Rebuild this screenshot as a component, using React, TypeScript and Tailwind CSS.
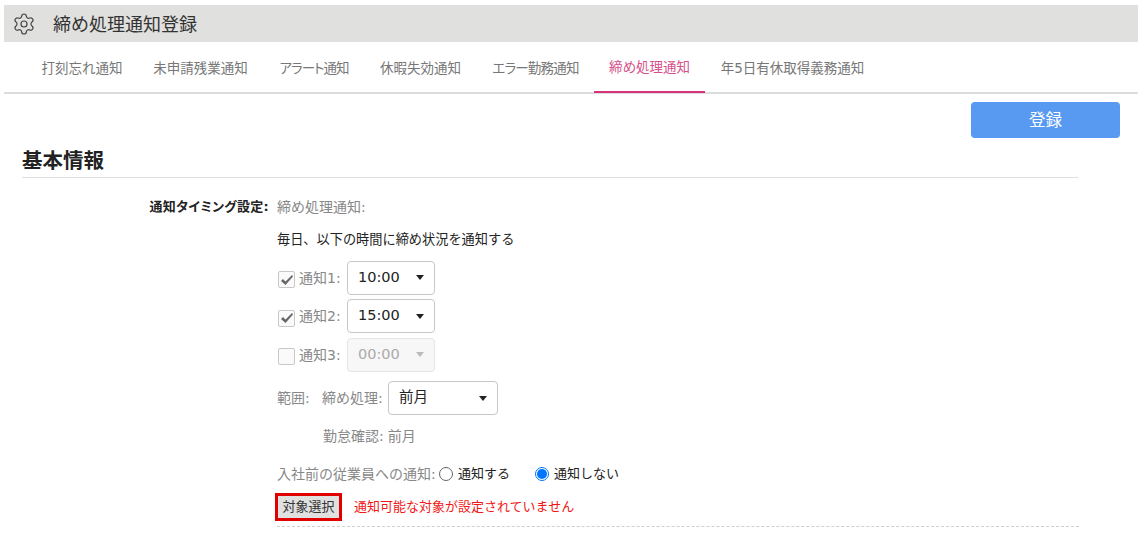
import React from 'react';
import { Settings } from 'lucide-react';

const font = "font-['DejaVu_Sans','Noto_Sans_CJK_JP',sans-serif]";

const tabs = [
  { label: '打刻忘れ通知', width: 'w-[110px]', extra: '' },
  { label: '未申請残業通知', width: 'w-[127px]', extra: '' },
  { label: 'アラート通知', width: 'w-[100px]', extra: 'tracking-[-1px]' },
  { label: '休暇失効通知', width: 'w-[113px]', extra: '' },
  { label: 'エラー勤務通知', width: 'w-[117px]', extra: 'tracking-[-0.8px]' },
  { label: '締め処理通知', width: 'w-[111px]', extra: '', active: true },
  { label: '年5日有休取得義務通知', width: 'w-[175px]', extra: '' },
];

function Check({ checked }: { checked: boolean }) {
  return (
    <span className="mt-[4px] ml-[1px] w-[17px] h-[17px] rounded-[2px] border border-[#c8c8c8] bg-[#fafafa] flex items-center justify-center shrink-0">
      {checked && (
        <svg width="14" height="12" viewBox="0 0 14 12">
          <path d="M1 7 L3 5 L5.5 7.5 L12 1 L13 2.5 L5.5 11 Z" fill="#666" />
        </svg>
      )}
    </span>
  );
}

function Select({ value, width, disabled }: { value: string; width: string; disabled?: boolean }) {
  return (
    <div
      className={`${width} h-[34px] rounded-[4px] border flex items-center justify-between pl-[10px] pr-[10px] text-[14.5px] ${
        disabled ? 'border-[#e4e4e4] bg-[#f7f7f7] text-[#aaa]' : 'border-[#c8c8c8] bg-white text-[#222]'
      }`}
    >
      <span>{value}</span>
      <span
        className={`w-0 h-0 border-x-[4px] border-x-transparent border-t-[5px] ${
          disabled ? 'border-t-[#bbb]' : 'border-t-[#222]'
        }`}
      />
    </div>
  );
}

function NotifyRow({ n, time, checked, disabled }: { n: number; time: string; checked: boolean; disabled?: boolean }) {
  return (
    <div className="flex items-center h-[34px] mb-[4.5px]">
      <Check checked={checked} />
      <span className="ml-[4px] w-[48px] text-[#888] text-[14px] mt-[1px]">通知{n}:</span>
      <Select value={time} width="w-[88px]" disabled={disabled} />
    </div>
  );
}

function Radio({ checked }: { checked: boolean }) {
  return checked ? (
    <span className="w-[14px] h-[14px] rounded-full border border-[#0075ff] bg-white flex items-center justify-center">
      <span className="w-[10px] h-[10px] rounded-full bg-[#0075ff]" />
    </span>
  ) : (
    <span className="w-[14px] h-[14px] rounded-full border border-[#666] bg-white" />
  );
}

export default function App() {
  return (
    <div className={`${font} w-[1138px] h-[542px] overflow-hidden bg-white pt-[5px] pl-[4px] text-[13px]`}>
      <div className="h-[37px] bg-[#e0e0de] flex items-center pl-[8px]">
        <Settings size={24} strokeWidth={1.2} className="text-[#444]" />
        <span className="ml-[17px] pt-[1px] text-[18px] text-[#333]">締め処理通知登録</span>
      </div>

      <div className="h-[52px] border-b-2 border-[#dcdcdc] flex pl-[23px]">
        {tabs.map((t) => (
          <div
            key={t.label}
            className={`${t.width} ${t.extra} h-[51px] pt-[2px] flex items-center justify-center text-[13.5px] [font-feature-settings:'palt'] ${
              t.active ? 'border-b-2 border-[#d6337c] text-[#d6518a]' : 'text-[#777]'
            }`}
          >
            {t.label}
          </div>
        ))}
      </div>

      <div className="flex justify-end pr-[18px] pt-[8px]">
        <button className="w-[149px] h-[36px] rounded-[4px] bg-[#5899f2] text-white text-[16.5px] pt-[2px]">登録</button>
      </div>

      <div className="ml-[18px] w-[1056px] h-[39.5px] border-b border-[#dedede] flex items-center text-[20.5px] font-bold text-[#222] pt-[9px]">
        基本情報
      </div>

      <div className="flex mt-[19px]">
        <div className="w-[265px] text-right font-bold text-[13px] tracking-[0.3px] text-[#222] leading-[20px] [font-feature-settings:'palt']">通知タイミング設定:</div>
        <div className="ml-[8px] w-[802px]">
          <div className="h-[20px] leading-[20px] text-[#888] text-[14px]">締め処理通知:</div>
          <div className="mt-[13px] h-[20px] leading-[20px] text-[#222] text-[13.2px]">毎日、以下の時間に締め状況を通知する</div>
          <div className="mt-[11px]">
            <NotifyRow n={1} time="10:00" checked />
            <NotifyRow n={2} time="15:00" checked />
            <NotifyRow n={3} time="00:00" checked={false} disabled />
          </div>
          <div className="mt-[9.5px] flex items-center h-[34px] text-[#888] text-[14px]">
            <span className="w-[45px]">範囲:</span>
            <span className="w-[66px]">締め処理:</span>
            <Select value="前月" width="w-[110px]" />
          </div>
          <div className="mt-[11px] ml-[46px] h-[20px] leading-[20px] text-[#888] text-[14px]">勤怠確認:<span className="ml-[4px]">前月</span></div>
          <div className="mt-[18px] flex items-center h-[20px] text-[#888] text-[14px]">
            <span className="w-[162px]">入社前の従業員への通知:</span>
            <Radio checked={false} />
            <span className="ml-[5px] w-[77px] text-[#222] text-[13px]">通知する</span>
            <Radio checked />
            <span className="ml-[5px] text-[#222] text-[13px]">通知しない</span>
          </div>
          <div className="mt-[9px] flex items-center h-[28px]">
            <button className="w-[67px] h-[28px] border-[3px] border-[#e00000] bg-[#e0e0e0] text-[#333] text-[13px] flex items-center justify-center -ml-[2px]">
              対象選択
            </button>
            <span className="ml-[12px] text-[#f01818]">通知可能な対象が設定されていません</span>
          </div>
          <div className="mt-[5px] border-b border-dashed border-[#cfcfcf]" />
        </div>
      </div>
    </div>
  );
}
